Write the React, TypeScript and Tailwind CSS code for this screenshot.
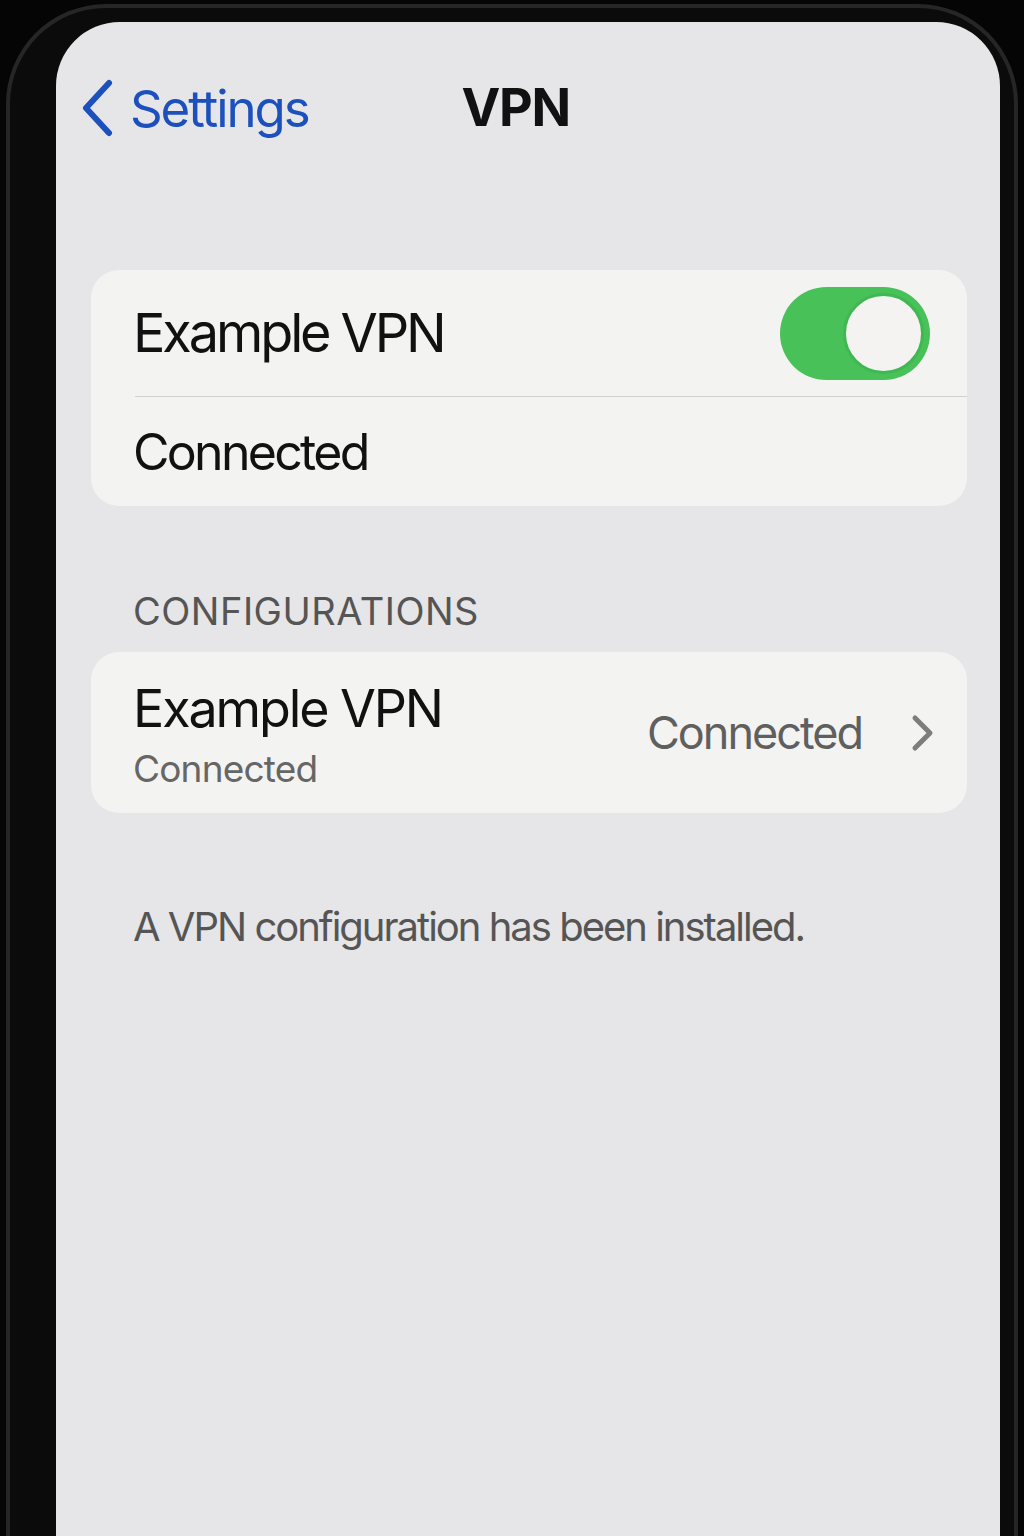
function Toggle() {
	return (
		<div className="w-[150px] h-[93px] rounded-full bg-[#48c159] flex items-center justify-end pr-[6px]">
			<div className="w-[81px] h-[81px] rounded-full bg-[#f4f3f2] border-[3px] border-[#3fb851]" />
		</div>
	);
}

export default function App() {
	return (
		<div
			className="w-[1024px] h-[1536px] bg-[#050505] overflow-hidden pt-[4px] pl-[6px] pr-[6px]"
			style={{ fontFamily: "Inter, 'Noto Sans', sans-serif" }}
		>
			<div className="h-full rounded-t-[100px] border-x-[4px] border-t-[4px] border-[#262626] bg-[#0b0b0b] pt-[14px] pl-[46px] pr-[14px]">
				<div className="h-full rounded-t-[64px] bg-[#e6e5e7] flex flex-col">
					{/* nav bar */}
					<div className="mt-[56px] h-[60px] flex items-center pl-[24px]">
						<svg width="36" height="58" viewBox="0 0 36 58" className="mr-[14px]">
							<path
								d="M29 4 L6 29 L29 54"
								fill="none"
								stroke="#1c50bd"
								strokeWidth="6"
								strokeLinecap="round"
								strokeLinejoin="round"
							/>
						</svg>
						<span className="text-[51px] leading-none tracking-[-2.1px] text-[#1c50bd]">Settings</span>
						<span className="ml-[153px] text-[52px] leading-none font-bold tracking-[-1.3px] text-[#111]">VPN</span>
					</div>

					{/* toggle card */}
					<div className="mt-[132px] ml-[35px] mr-[33px] rounded-[28px] bg-[#f3f3f2]">
						<div className="h-[126px] flex items-center justify-between pl-[42px] pr-[37px]">
							<span className="text-[54px] leading-none tracking-[-3.1px] text-[#111]">Example VPN</span>
							<Toggle />
						</div>
						<div className="ml-[44px] h-[1px] bg-[#d2d1d1]" />
						<div className="h-[109px] flex items-center pl-[42px]">
							<span className="text-[50px] leading-none tracking-[-2.7px] text-[#111]">Connected</span>
						</div>
					</div>

					{/* configurations */}
					<div className="mt-[86px] pl-[77px] text-[38px] leading-none tracking-[0.5px] text-[#555]">CONFIGURATIONS</div>
					<div className="mt-[22px] ml-[35px] mr-[33px] h-[161px] rounded-[28px] bg-[#f3f3f2] flex items-center justify-between pl-[42px] pr-[32px]">
						<div className="flex flex-col self-start pt-[31px]">
							<span className="text-[52px] leading-none tracking-[-2.1px] text-[#111]">Example VPN</span>
							<span className="mt-[15px] text-[37px] leading-none tracking-[-0.8px] text-[#666]">Connected</span>
						</div>
						<div className="flex items-center">
							<span className="text-[45px] leading-none tracking-[-2px] text-[#5f5f5f]">Connected</span>
							<svg width="24" height="38" viewBox="0 0 24 38" className="ml-[49px]">
								<path
									d="M4 4 L19 19 L4 34"
									fill="none"
									stroke="#7d7d7d"
									strokeWidth="5"
									strokeLinecap="round"
									strokeLinejoin="round"
								/>
							</svg>
						</div>
					</div>

					<div className="mt-[94px] pl-[77px] text-[40px] leading-none tracking-[-2px] text-[#555]">
						A VPN configuration has been installed.
					</div>
				</div>
			</div>
		</div>
	);
}
